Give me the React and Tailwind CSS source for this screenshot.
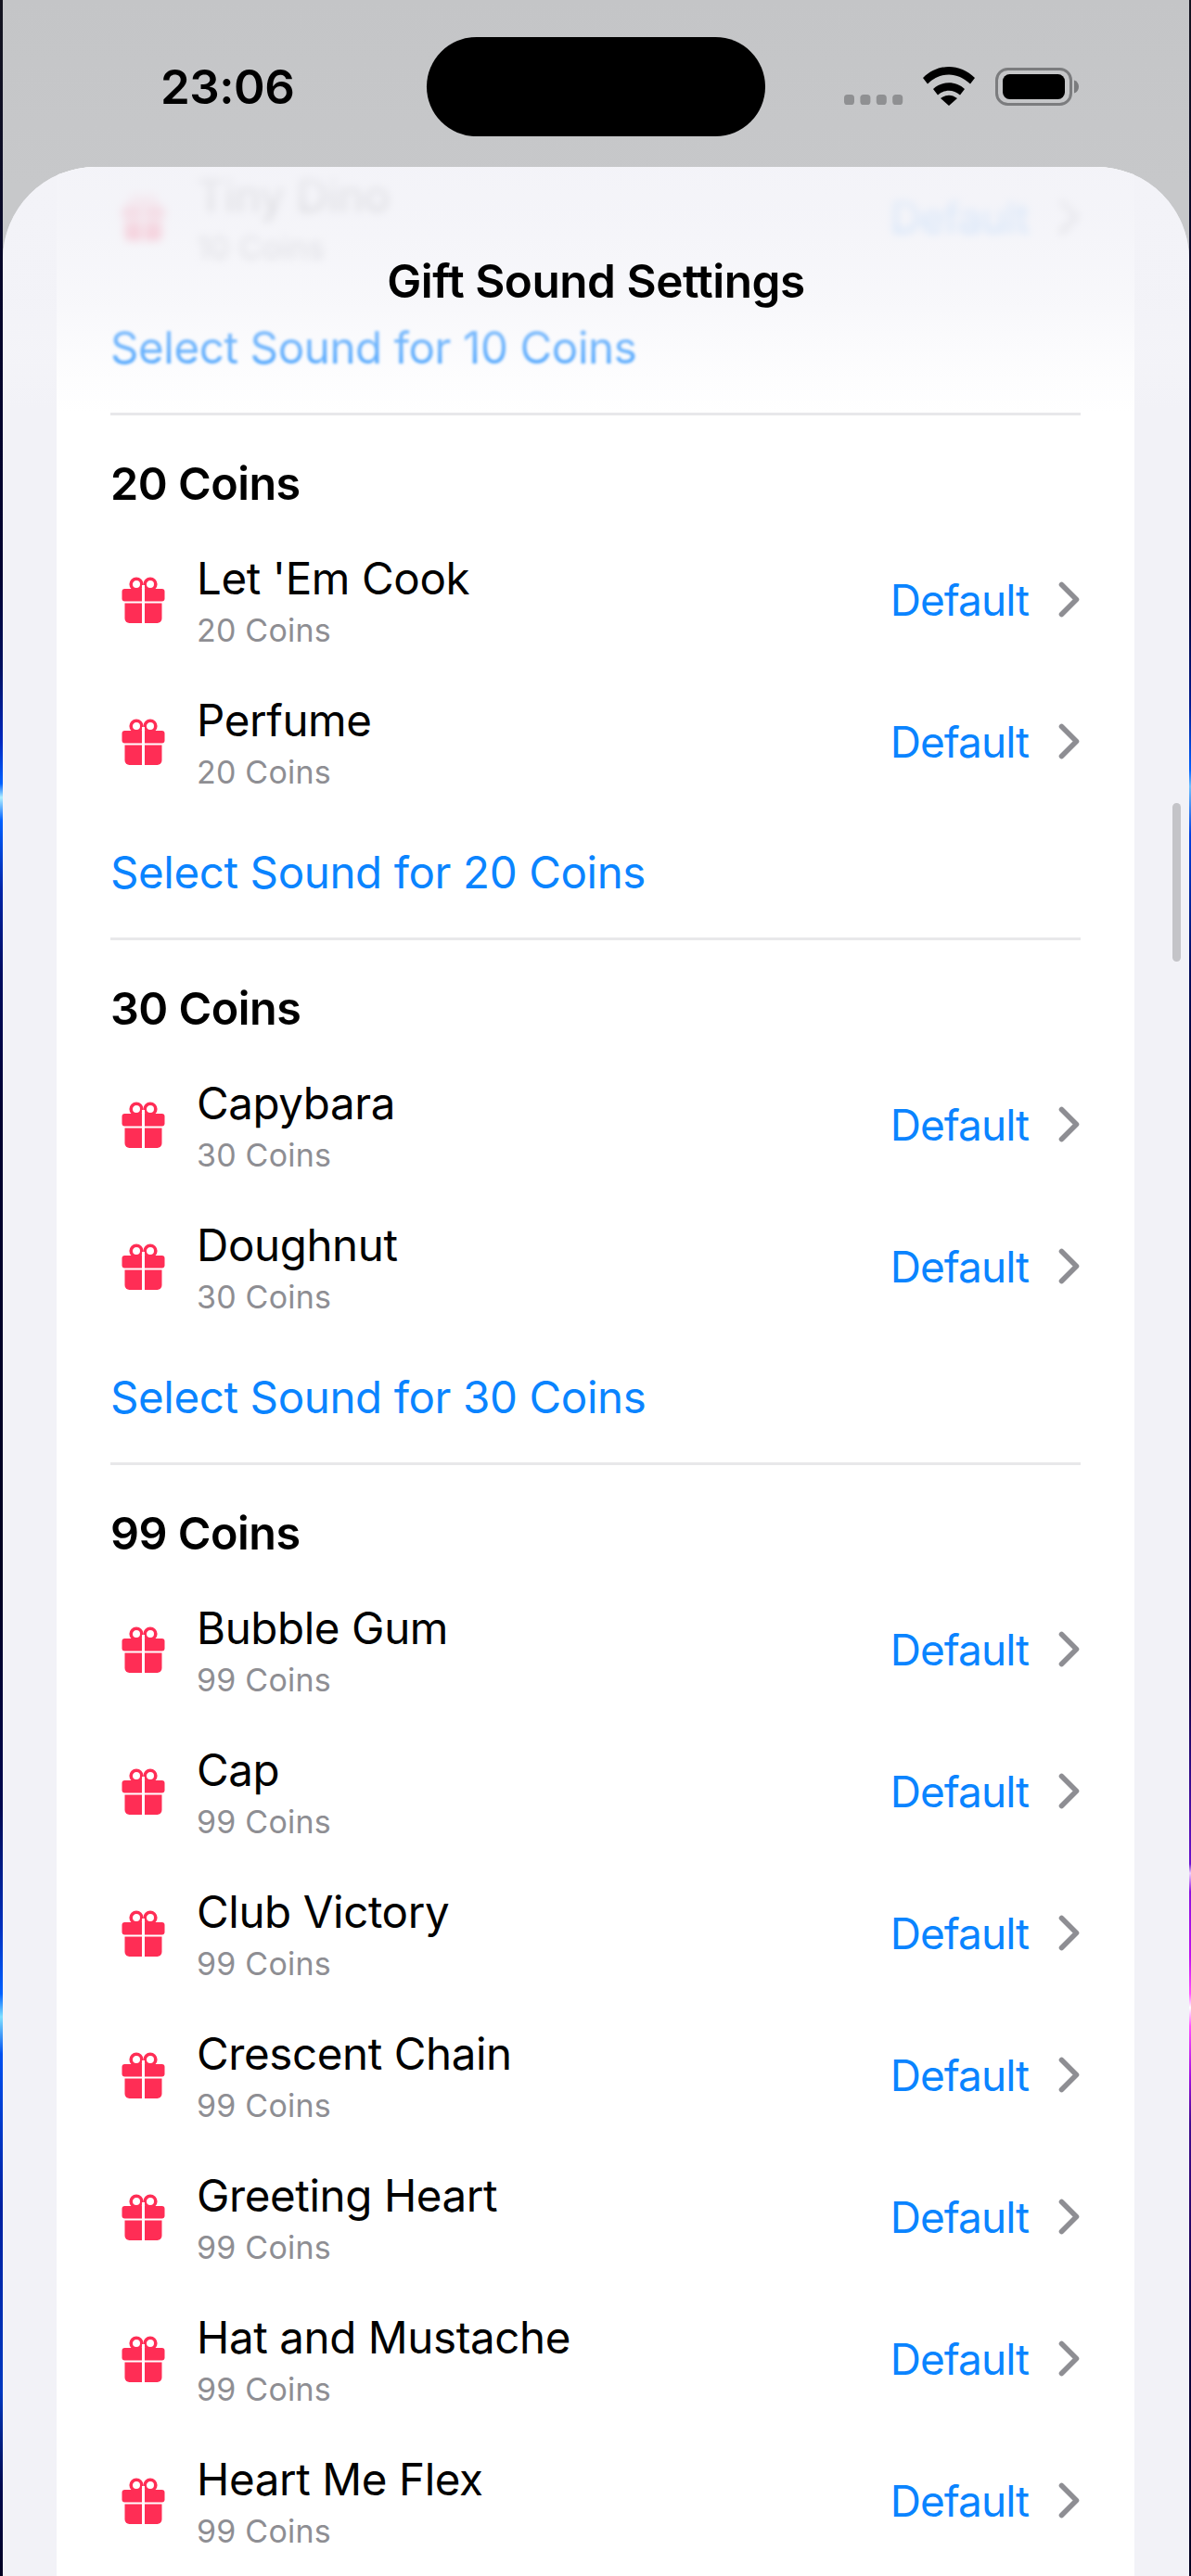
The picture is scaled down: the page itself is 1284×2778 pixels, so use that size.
import React from "react";

const FONT = "font-['Inter','Noto_Sans',sans-serif]";

function Gift() {
  return (
    <svg width="47" height="50" viewBox="0 0 47 50" className="shrink-0">
      <circle cx="16" cy="8" r="5.8" fill="none" stroke="#ff2d55" strokeWidth="3.6" />
      <circle cx="31" cy="8" r="5.8" fill="none" stroke="#ff2d55" strokeWidth="3.6" />
      <rect x="0.5" y="13" width="46" height="13.5" rx="3" fill="#ff2d55" />
      <path d="M3.5 28.5H43.5V45a5 5 0 0 1-5 5H8.5a5 5 0 0 1-5-5Z" fill="#ff2d55" />
      <rect x="22" y="9" width="3" height="41" fill="#ffffff" />
    </svg>
  );
}

function Chevron() {
  return (
    <svg width="24" height="40" viewBox="0 0 24 40" className="shrink-0">
      <path d="M3.5 3.5L19.5 19.5L3.5 35.5" fill="none" stroke="#8e8e93" strokeWidth="5.6" strokeLinecap="round" strokeLinejoin="round" />
    </svg>
  );
}

function Row({ name, coins, className = "" }) {
  return (
    <div className={`flex h-[153px] items-center ${className}`}>
      <div className="ml-[12px] mr-[34px] flex w-[47px] shrink-0">
        <Gift />
      </div>
      <div className="flex min-w-0 flex-1 flex-col gap-[6px] pt-[4px]">
        <span className="text-[47.5px] leading-[56px] tracking-[-0.4px] text-black">{name}</span>
        <span className="text-[34px] leading-[44px] tracking-[0.2px] text-[#8e8e93]">{coins} Coins</span>
      </div>
      <span className="mr-[32px] text-[46px] leading-[56px] tracking-[-1px] text-[#0a84ff]">Default</span>
      <Chevron />
    </div>
  );
}

function SelectBtn({ coins, className = "" }) {
  return (
    <div className="flex h-[135px] items-start pt-[37px]">
      <span className={`text-[47.5px] leading-[56px] tracking-[-0.4px] text-[#0a84ff] ${className}`}>
        Select Sound for {coins} Coins
      </span>
    </div>
  );
}

function Section({ coins, names, last = false }) {
  return (
    <section className="border-t-[3px] border-[#e8e8ea] pt-[22px]">
      <h2 className="flex h-[100px] items-center pt-[4px] text-[48.5px] font-semibold tracking-[-0.5px] text-black">{coins} Coins</h2>
      {names.map((n) => (
        <Row key={n} name={n} coins={coins} />
      ))}
      {!last && <SelectBtn coins={coins} />}
    </section>
  );
}

function StatusIcons() {
  return (
    <svg width="256" height="50" viewBox="0 0 256 50" className="mt-[68px]">
      {[0, 17.4, 34.8, 52.2].map((x) => (
        <rect key={x} x={x} y="34" width="11" height="11" rx="3.6" fill="#8f9092" />
      ))}
      <g transform="translate(85 4)">
        <path d="M0 12C16 -4 40 -4 56 12L51 18.5C37 5 19 5 5 18.5Z" fill="#000" />
        <path d="M11 24C20 15 36 15 45 24L40 30.5C33 24 23 24 16 30.5Z" fill="#000" />
        <path d="M19 34C25 29.5 31 29.5 37 34L28 42Z" fill="#000" />
      </g>
      <rect x="164.5" y="6.5" width="80" height="38" rx="12" fill="none" stroke="#7b7c7e" strokeWidth="3" />
      <rect x="171" y="12" width="67" height="27" rx="7.5" fill="#000" />
      <path d="M248 18.5c3.4 1 5 3.7 5 7s-1.6 6-5 7Z" fill="#7b7c7e" />
    </svg>
  );
}

export default function App() {
  return (
    <div className={`flex h-[2778px] w-[1284px] overflow-hidden bg-black ${FONT}`}>
      <div className="w-[3px] shrink-0 bg-[linear-gradient(180deg,#14141f_0px,#06062a_300px,#020230_620px,#001060_720px,#0028c0_800px,#0060ff_845px,#b0f0ff_860px,#0060ff_885px,#0024a8_960px,#000c60_1050px,#000030_1200px,#000020_1700px,#000850_1950px,#0030c0_2080px,#0060ff_2150px,#80e0ff_2175px,#0050f0_2215px,#0020a0_2380px,#0038c0_2580px,#000a50_2680px,#000020_2778px)]" />
      <div className="flex min-w-0 flex-1 flex-col bg-[linear-gradient(180deg,#c4c5c7_0px,#c7c8ca_200px)]">
        <header className="flex h-[180px] shrink-0 items-start">
          <div className="w-[457px] pl-[170px] pt-[64px] text-[51px] font-semibold leading-[60px] tracking-[-0.5px] text-black">23:06</div>
          <div className="mt-[40px] h-[107px] w-[365px] shrink-0 rounded-[54px] bg-black" />
          <div className="pl-[85px]">
            <StatusIcons />
          </div>
        </header>
        <main className="relative min-h-0 flex-1 overflow-hidden rounded-t-[100px] bg-[#f2f2f7]">
          <div className="ml-[58px] mr-[59px] -mt-[23px] bg-white px-[58px] pb-[60px]">
            <Row name="Tiny Dino" coins={10} className="blur-[5px]" />
            <SelectBtn coins={10} className="blur-[1.5px]" />
            <Section coins={20} names={["Let 'Em Cook", "Perfume"]} />
            <Section coins={30} names={["Capybara", "Doughnut"]} />
            <Section
              coins={99}
              last
              names={["Bubble Gum", "Cap", "Club Victory", "Crescent Chain", "Greeting Heart", "Hat and Mustache", "Heart Me Flex"]}
            />
          </div>
          <div className="absolute inset-x-0 top-0 flex h-[266px] justify-center bg-[linear-gradient(180deg,rgba(243,243,248,0.96)_0%,rgba(243,243,248,0.88)_22%,rgba(243,243,248,0.62)_55%,rgba(246,246,250,0.4)_75%,rgba(255,255,255,0)_100%)] pt-[93px]">
            <h1 className="text-[49.5px] font-semibold leading-[60px] tracking-[-0.5px] text-black">Gift Sound Settings</h1>
          </div>
          <div className="absolute right-[9px] top-[686px] h-[171px] w-[9px] rounded-full bg-[#c4c4c8]" />
        </main>
      </div>
      <div className="w-[2px] shrink-0 bg-[linear-gradient(180deg,#14141f_0px,#06062a_300px,#02022a_640px,#001a90_760px,#0060ff_830px,#70c0ff_848px,#0040e0_900px,#000c60_1040px,#000020_1200px,#0a0030_1800px,#2a0a80_1900px,#6a10d0_2010px,#f0d0ff_2020px,#8a10e0_2040px,#c010f0_2110px,#ff50ff_2150px,#ffffff_2165px,#ff50ff_2185px,#a010e0_2240px,#400a90_2290px,#0a0040_2500px,#000020_2778px)]" />
    </div>
  );
}
